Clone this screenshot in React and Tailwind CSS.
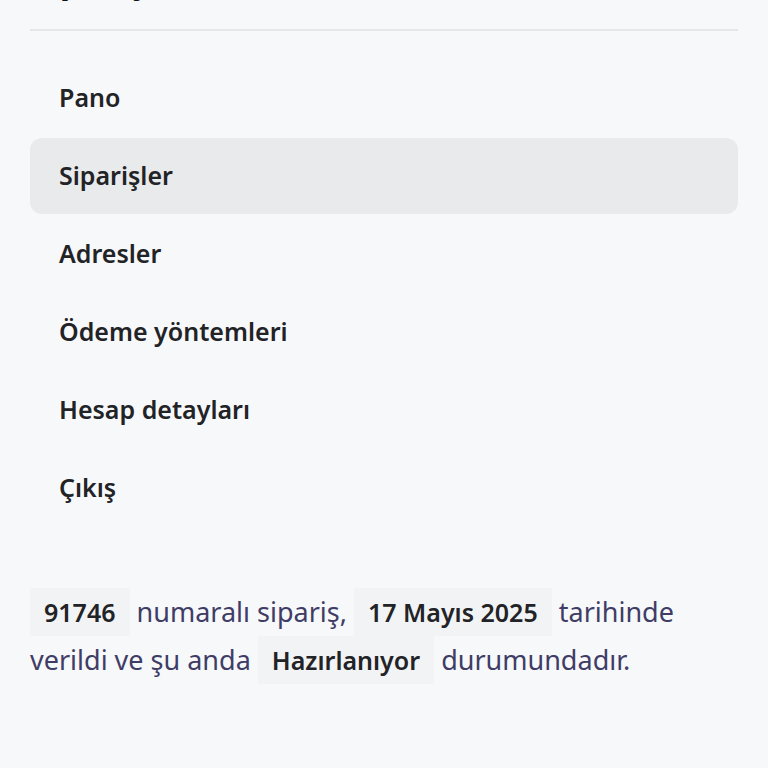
import React from "react";

const menu = ["Pano", "Siparişler", "Adresler", "Ödeme yöntemleri", "Hesap detayları", "Çıkış"];

const Mark = ({ children }) => (
  <mark className="bg-[#f2f3f5] text-[#222326] text-[25px] font-semibold px-[14px] py-[7px]">{children}</mark>
);

export default function App() {
  return (
    <div
      className="h-[768px] overflow-hidden bg-[#f7f8fa] px-[30px]"
      style={{ fontFamily: '"Noto Sans", "DejaVu Sans", sans-serif' }}
    >
      <h2 className="-mt-[42px] pb-[29px] border-b-2 border-[#e6e7ea] text-[35px] leading-[42px] font-bold text-[#111214]">
        Sipariş #91746
      </h2>

      {/* Hesap menüsü */}
      <nav className="mt-[29px] flex flex-col gap-[2px]">
        {menu.map((item) => (
          <a
            key={item}
            href="#"
            className={`h-[76px] flex items-center px-[29px] rounded-[12px] text-[25px] font-semibold text-[#222326] ${
              item === "Siparişler" ? "bg-[#e9eaec]" : ""
            }`}
          >
            {item}
          </a>
        ))}
      </nav>

      <p className="mt-[62px] text-[27px] leading-[48px] text-[#3f3d66]">
        <Mark>91746</Mark> numaralı sipariş, <Mark>17 Mayıs 2025</Mark> tarihinde verildi ve şu anda{" "}
        <Mark>Hazırlanıyor</Mark> durumundadır.
      </p>

      <h2 className="mt-[75px] text-[48px] leading-[1.2] font-bold text-[#111214]">Sipariş detayları</h2>
    </div>
  );
}
